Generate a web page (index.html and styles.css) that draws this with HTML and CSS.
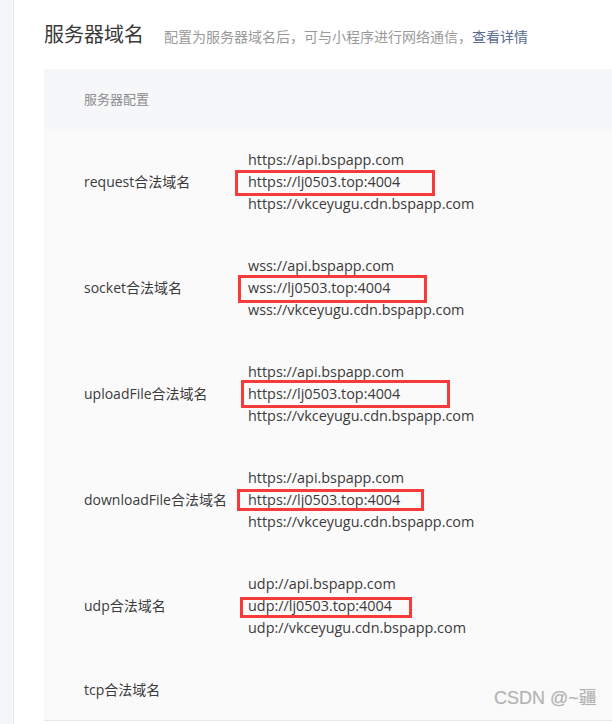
FILE: index.html
```html
<!DOCTYPE html>
<html lang="zh-CN">
<head>
<meta charset="utf-8">
<title>服务器域名</title>
<link rel="stylesheet" href="styles.css">
</head>
<body>
<div class="page">
  <aside class="side"></aside>
  <main class="main">
    <div class="title-bar">
      <h2 class="title">服务器域名</h2>
      <span class="desc">配置为服务器域名后，可与小程序进行网络通信，<a class="link" href="#">查看详情</a></span>
    </div>
    <section class="panel">
      <div class="panel-head">服务器配置</div>
      <div class="row">
        <div class="label">request合法域名</div>
        <div class="urls">
          <div>https://api.bspapp.com</div>
          <div>https://lj0503.top:4004</div>
          <div>https://vkceyugu.cdn.bspapp.com</div>
        </div>
        <span class="mark m1"></span>
      </div>
      <div class="row">
        <div class="label">socket合法域名</div>
        <div class="urls">
          <div>wss://api.bspapp.com</div>
          <div>wss://lj0503.top:4004</div>
          <div>wss://vkceyugu.cdn.bspapp.com</div>
        </div>
        <span class="mark m2"></span>
      </div>
      <div class="row">
        <div class="label">uploadFile合法域名</div>
        <div class="urls">
          <div>https://api.bspapp.com</div>
          <div>https://lj0503.top:4004</div>
          <div>https://vkceyugu.cdn.bspapp.com</div>
        </div>
        <span class="mark m3"></span>
      </div>
      <div class="row">
        <div class="label">downloadFile合法域名</div>
        <div class="urls">
          <div>https://api.bspapp.com</div>
          <div>https://lj0503.top:4004</div>
          <div>https://vkceyugu.cdn.bspapp.com</div>
        </div>
        <span class="mark m4"></span>
      </div>
      <div class="row">
        <div class="label">udp合法域名</div>
        <div class="urls">
          <div>udp://api.bspapp.com</div>
          <div>udp://lj0503.top:4004</div>
          <div>udp://vkceyugu.cdn.bspapp.com</div>
        </div>
        <span class="mark m5"></span>
      </div>
      <div class="row row-last">
        <div class="label">tcp合法域名</div>
        <div class="urls"></div>
        <span class="watermark">CSDN @~疆</span>
      </div>
    </section>
  </main>
</div>
</body>
</html>
```
FILE: styles.css
```css
* { box-sizing: border-box; }
html, body { margin: 0; padding: 0; background: #fff; }
body {
  font-family: "Open Sans", "Noto Sans CJK SC", sans-serif;
  color: #353535;
  overflow: hidden;
}
.page { display: flex; min-height: 724px; }
.side {
  width: 14px;
  flex: none;
  background: #f5f6f7;
  border-right: 1px solid #e7e8eb;
}
.main { flex: 1; min-width: 0; padding-left: 30px; }
.title-bar {
  display: flex;
  align-items: baseline;
  height: 69px;
  padding-top: 19px;
}
.title {
  margin: 0;
  font-size: 20px;
  font-weight: normal;
  color: #3a3a3a;
  font-family: "Noto Sans CJK SC", sans-serif;
  line-height: 30px;
}
.desc {
  margin-left: 20px;
  font-size: 14px;
  color: #9a9a9a;
  font-family: "Noto Sans CJK SC", sans-serif;
}
.link { color: #576b95; text-decoration: none; }
.panel {
  background: #fafafa;
  border-bottom: 1px solid #e7e7eb;
}
.panel-head {
  background: #f6f7f9;
  height: 60px;
  padding-left: 40px;
  line-height: 60px;
  font-size: 13px;
  color: #8d8d8d;
  font-family: "Noto Sans CJK SC", sans-serif;
}
.row {
  position: relative;
  display: flex;
  align-items: center;
  padding: 20px 0 20px 40px;
  height: 106px;
}
.row-last { height: 61px; padding-bottom: 19px; }
.label {
  width: 164px;
  flex: none;
  font-size: 14px;
  line-height: 22px;
  color: #3b3b3b;
}
.urls {
  font-size: 14.4px;
  line-height: 22px;
  white-space: nowrap;
  color: #3b3b3b;
}
.mark {
  position: absolute;
  border: 3px solid #f73b3b;
}
.m1 { left: 191px; top: 41px; width: 200px; height: 26px; }
.m2 { left: 194px; top: 40px; width: 189px; height: 28px; }
.m3 { left: 197px; top: 39px; width: 209px; height: 28px; }
.m4 { left: 193px; top: 42px; width: 187px; height: 22px; }
.m5 { left: 196px; top: 44px; width: 172px; height: 21px; }
.watermark {
  position: absolute;
  left: 450px;
  top: 24px;
  font-size: 18px;
  color: #b3b3b3;
  font-family: "Liberation Sans", "Noto Sans CJK SC", sans-serif;
  text-shadow: 0 0 1px #ddd;
  white-space: nowrap;
}
```
